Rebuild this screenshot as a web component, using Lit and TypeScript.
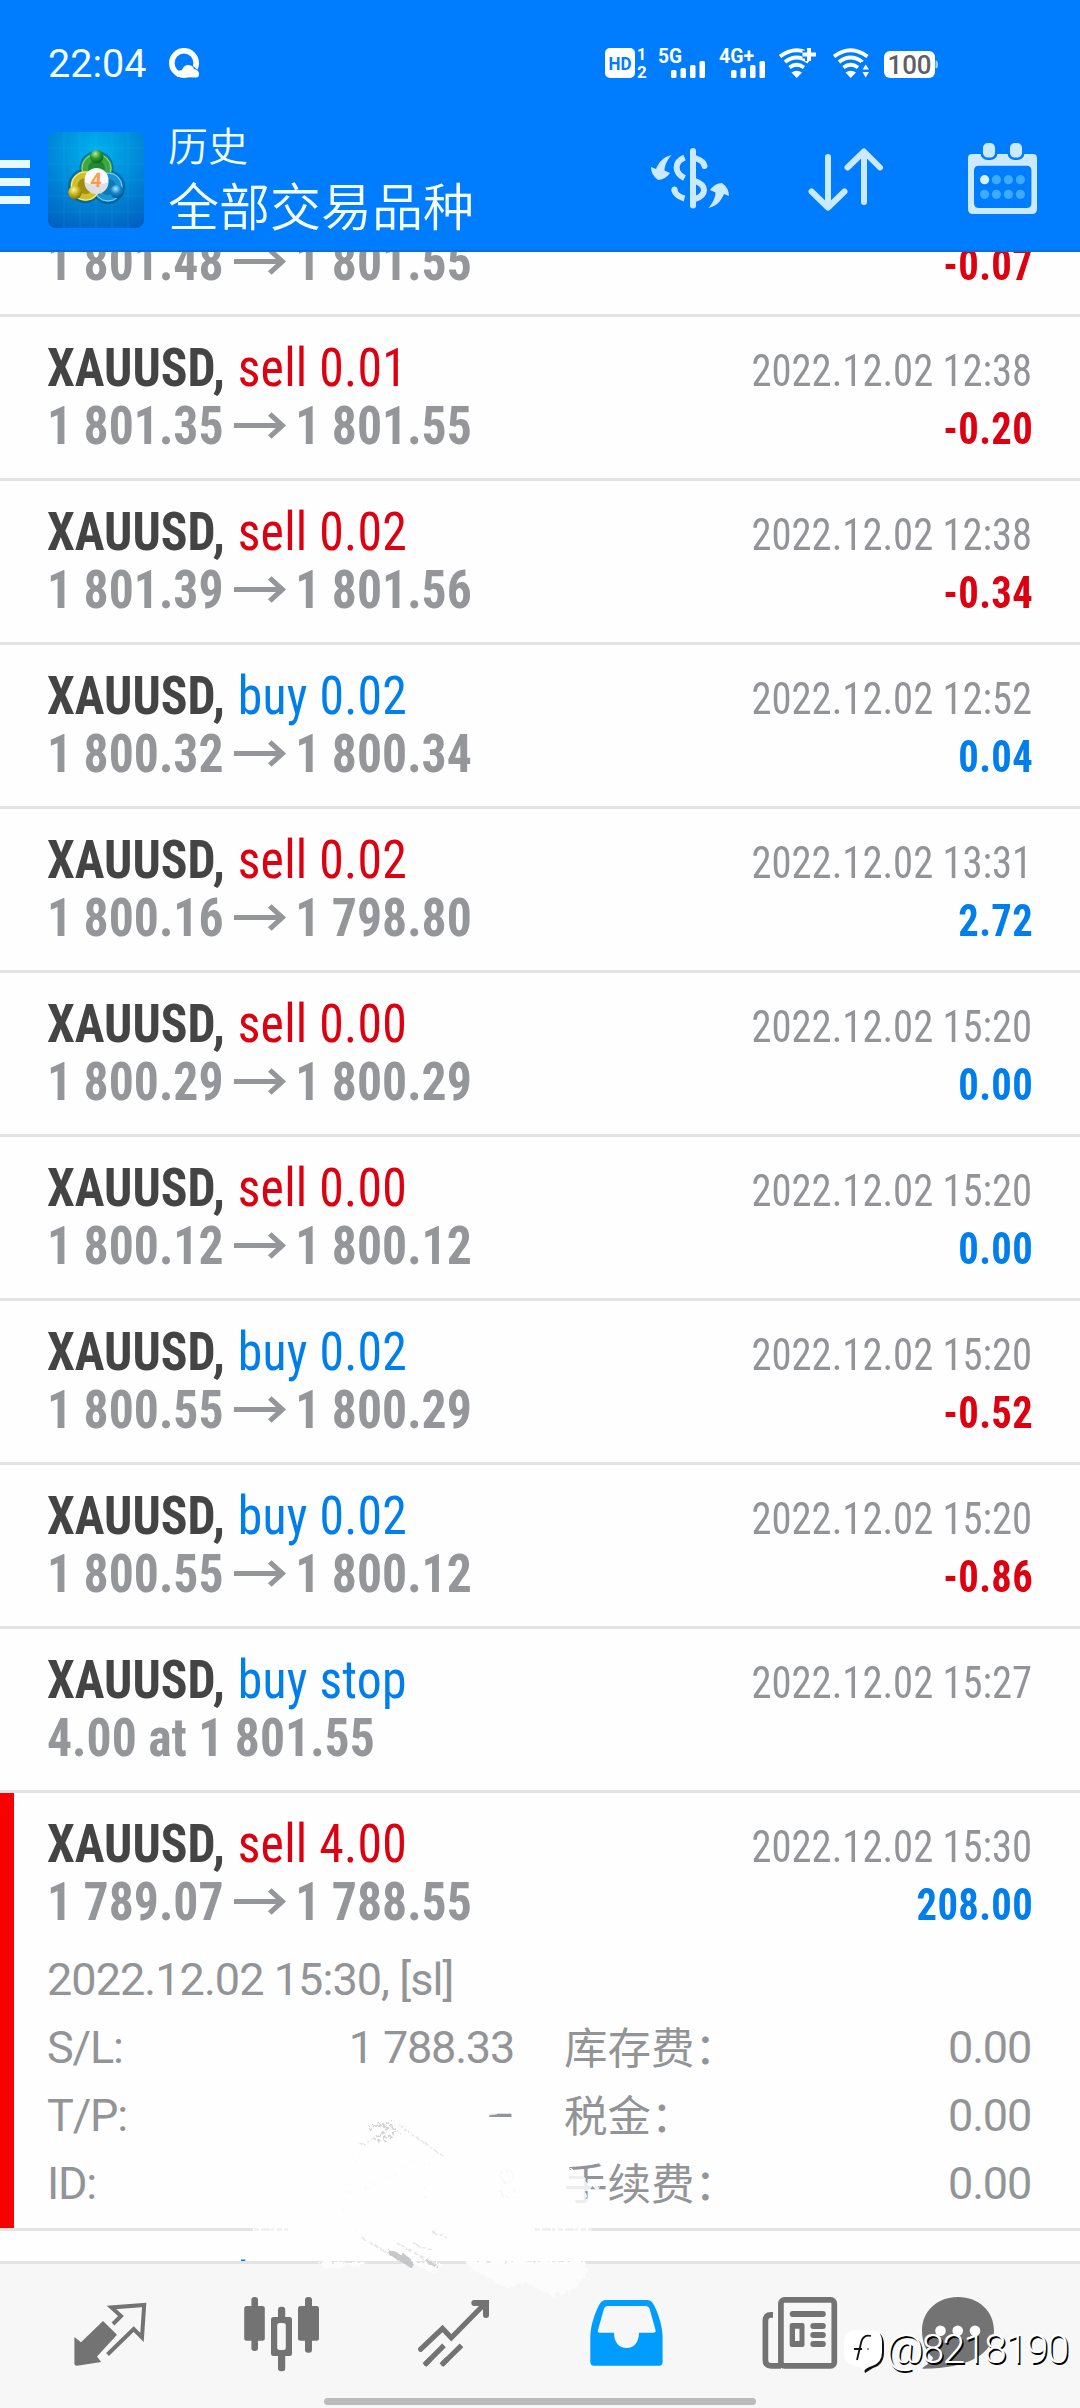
import { LitElement, html, svg, css, nothing } from "lit";
import { customElement, property } from "lit/decorators.js";

interface Deal {
  side: "buy" | "sell";
  label: string;
  from?: string;
  to?: string;
  note?: string;
  time: string;
  profit?: string;
}

const DEALS: Deal[] = [
  { side: "sell", label: "sell 0.01", from: "1 801.48", to: "1 801.55", time: "2022.12.02 12:38", profit: "-0.07" },
  { side: "sell", label: "sell 0.01", from: "1 801.35", to: "1 801.55", time: "2022.12.02 12:38", profit: "-0.20" },
  { side: "sell", label: "sell 0.02", from: "1 801.39", to: "1 801.56", time: "2022.12.02 12:38", profit: "-0.34" },
  { side: "buy", label: "buy 0.02", from: "1 800.32", to: "1 800.34", time: "2022.12.02 12:52", profit: "0.04" },
  { side: "sell", label: "sell 0.02", from: "1 800.16", to: "1 798.80", time: "2022.12.02 13:31", profit: "2.72" },
  { side: "sell", label: "sell 0.00", from: "1 800.29", to: "1 800.29", time: "2022.12.02 15:20", profit: "0.00" },
  { side: "sell", label: "sell 0.00", from: "1 800.12", to: "1 800.12", time: "2022.12.02 15:20", profit: "0.00" },
  { side: "buy", label: "buy 0.02", from: "1 800.55", to: "1 800.29", time: "2022.12.02 15:20", profit: "-0.52" },
  { side: "buy", label: "buy 0.02", from: "1 800.55", to: "1 800.12", time: "2022.12.02 15:20", profit: "-0.86" },
  { side: "buy", label: "buy stop", note: "4.00 at 1 801.55", time: "2022.12.02 15:27" },
];

const OPEN_DEAL: Deal = {
  side: "sell", label: "sell 4.00", from: "1 789.07", to: "1 788.55", time: "2022.12.02 15:30", profit: "208.00",
};

const DETAILS = [
  ["S/L:", "1 788.33", "库存费：", "0.00"],
  ["T/P:", "–", "税金：", "0.00"],
  ["ID:", "", "手续费：", "0.00"],
];

@customElement("deal-row")
export class DealRow extends LitElement {
  @property({ attribute: false }) deal!: Deal;

  static styles = css`
    :host { display: block; height: 161px; flex: none; font-family: "Roboto Condensed", Roboto, sans-serif; font-stretch: 75%; }
    .row { display: flex; justify-content: space-between; height: 100%; padding: 22px 48px 0 47px; box-sizing: border-box; }
    .left { transform: scaleX(.92); transform-origin: left; }
    .right { transform: scaleX(.902); transform-origin: right; }
    .line { display: flex; align-items: baseline; height: 58px; line-height: 58px; font-size: 54px; white-space: pre; }
    .right .line { justify-content: flex-end; font-size: 45px; padding-top: 6px; height: 52px; line-height: 52px; }
    .symbol { font-weight: 700; color: #444; margin-right: 1.500px; }
    .buy, .pos { color: #007fec; }
    .sell, .neg { color: #dc0010; }
    .sell, .buy { letter-spacing: .300px; }
    .price { font-weight: 700; color: #949699; }
    .arrow { width: 59px; height: 30px; margin: 0 8px 0 11px; align-self: center; }
    .time { color: #929497; }
    .profit { font-weight: 700; letter-spacing: .400px; margin-right: -1px; }
  `;

  render() {
    const d = this.deal;
    return html`<div class="row">
      <div class="left">
        <div class="line"><span class="symbol">XAUUSD, </span><span class=${d.side}>${d.label}</span></div>
        <div class="line price">${d.note ?? html`<span>${d.from}</span><svg class="arrow" viewBox="0 0 52 30" preserveAspectRatio="none"><path d="M0 14.5H45M34.500 3L46.500 14.500L34.500 26" fill="none" stroke="#949699" stroke-width="5"/></svg><span>${d.to}</span>`}</div>
      </div>
      <div class="right">
        <div class="line"><span class="time">${d.time}</span></div>
        ${d.profit ? html`<div class="line"><span class="profit ${d.profit.startsWith("-") ? "neg" : "pos"}">${d.profit}</span></div>` : nothing}
      </div>
    </div>`;
  }
}

const bars = svg`<rect x="13" y="22" width="5.500" height="8" rx="1.500"/><rect x="22.500" y="20" width="5.500" height="10" rx="1.500"/><rect x="32" y="17" width="5.500" height="13" rx="1.500"/><rect x="41.500" y="13" width="5.500" height="17" rx="1.500"/>`;

const wifiArcs = svg`<g fill="none" stroke="#fff" stroke-width="3.800"><path d="M1 8.500Q17.500-4 34.500 8.500"/><path d="M6 14Q17.500 5 29.500 14"/><path d="M10.500 19.500Q17.500 14 25 19.500"/></g><path d="M12.500 24.500Q17.500 21 23 24.500L17.700 30Z"/>`;

const TABS = [
  svg`<path fill="#737373" d="M103 57L117 70.700 97 92.500 101.200 98 77 101.700Q74.400 101.700 74.400 99.500V73L81 78.300Z"/><path d="M113 60L121 52 111.500 43.500 144.200 41 142 73.500 133.700 65 107.500 90.500" fill="none" stroke="#737373" stroke-width="4"/>`,
  svg`<g fill="#737373"><rect x="251.400" y="33" width="6.600" height="54" rx="3"/><rect x="244.200" y="42" width="20.600" height="34.700" rx="2.500"/><rect x="278" y="42.700" width="7.200" height="64.500" rx="3"/><rect x="271" y="53" width="21" height="39" rx="2.500"/><rect x="305" y="33" width="7" height="55.700" rx="3"/><rect x="298" y="42" width="21" height="34.700" rx="2.500"/></g><rect x="277.200" y="59" width="8.600" height="27" rx="2.500" fill="#f7f7f7"/>`,
  svg`<g fill="none" stroke="#737373" stroke-width="5.200"><path stroke-linecap="round" d="M420.500 85.300L442.500 64.500 451.300 73.700 484 40.500"/><path stroke-width="6" stroke-linecap="round" d="M474.300 39H486V51"/><path d="M424.500 101L444 81.300M441.500 101L461.500 81.300"/><path stroke-linecap="round" d="M426 99.500L430 95.500M443 99.500L447 95.500"/></g>`,
  svg`<path fill="#009dff" fill-rule="evenodd" d="M590.300 98V73C590.300 61 596 46 600 39.500Q602 36 606 36H647Q651 36 653 39.500C657 46 662.600 61 662.600 73V98Q662.600 101.700 659 101.700H594Q590.300 101.700 590.300 98ZM607.500 42Q605 42 604 44.500L598 66Q597 68.700 600 68.700H614C614 78 619 84 626.500 84S639 78 639 68.700H653Q656.500 68.700 655.500 66L649.500 44.500Q648.500 42 646 42Z"/>`,
  svg`<g fill="none" stroke="#737373" stroke-width="5.700"><path d="M773 50.800H771Q765.400 50.800 765.400 57V96Q765.400 101.800 771 101.800H781"/><rect x="780.900" y="35.900" width="53.400" height="65.900" rx="3.500"/></g><g fill="#737373"><rect x="789.700" y="47" width="36.100" height="6" rx="3"/><path fill-rule="evenodd" d="M792 59H802.500Q804.500 59 804.500 61V81Q804.500 83 802.500 83H792Q789.700 83 789.700 81V61Q789.700 59 792 59ZM795 64.700V77H799.500V64.700Z"/><rect x="810.300" y="59" width="15.500" height="6" rx="3"/><rect x="810.300" y="68" width="15.500" height="6" rx="3"/><rect x="810.300" y="77" width="15.500" height="6" rx="3"/></g>`,
  svg`<path fill="#737373" d="M958 33C979 33 994 47.500 994 66.500C994 89 969 104.700 923 104.700Q921.500 104.500 923 103.500C930 98.500 933 96 933 93.500C926 88 922 78 922 66.500C922 47.500 937 33 958 33Z"/><g fill="#fff"><circle cx="940.500" cy="66.700" r="5.300"/><circle cx="957.700" cy="66.700" r="5.300"/><circle cx="975" cy="66.700" r="5.300"/></g>`,
];

@customElement("app-root")
export class AppRoot extends LitElement {
  static styles = css`
    :host { display: block; width: 1080px; height: 2408px; overflow: hidden; position: relative; background: #fefefe; font-family: Roboto, "Noto Sans CJK SC", sans-serif; }
    .page { display: flex; flex-direction: column; height: 2408px; }
    .header { height: 252px; flex: none; background: #007cff; color: #f4fdff; display: flex; flex-direction: column; box-sizing: border-box; border-bottom: 2px solid #0871d6; }
    .status { display: flex; align-items: flex-start; height: 100px; padding: 48px 142px 0 48px; box-sizing: border-box; }
    .clock { font-size: 39.500px; line-height: 31px; width: 120px; }
    .qicon { width: 32px; height: 32px; }
    .signals { margin-left: auto; display: block; width: 334px; height: 32px; overflow: visible; }
    .bar { display: flex; height: 150px; }
    .burger { width: 30px; display: flex; flex-direction: column; gap: 10px; padding-top: 60px; }
    .burger i { height: 8px; background: #e8f8ff; }
    .logo { width: 96px; height: 96px; margin: 32px 0 0 18px; }
    .titles { margin-left: 24px; display: flex; flex-direction: column; font-family: "Noto Sans CJK SC", sans-serif; font-weight: 350; padding-top: 16px; }
    .sub { font-size: 40px; line-height: 56px; height: 52px; }
    .main { font-size: 51px; line-height: 72px; height: 72px; }
    .actions { margin-left: auto; width: 440px; height: 100px; margin-top: 30px; }
    .list { flex: 1; min-height: 0; overflow: hidden; display: flex; flex-direction: column; }
    .list > deal-row, .open { border-bottom: 3px solid #e4e4e4; }
    .list > deal-row:first-child { margin-top: -99px; }
    .open { flex: none; height: 435px; position: relative; box-sizing: content-box; }
    .mark { position: absolute; left: 0; top: 0; width: 14px; height: 435px; background: #f80000; }
    .more { font-size: 45px; letter-spacing: -1.200px; color: #929497; padding: 0 48px 0 47px; line-height: 68px; margin-top: -8px; }
    .comment { height: 68px; letter-spacing: -.950px; }
    .grid { display: grid; grid-template-columns: 200px 1fr 50px 200px 1fr; width: 984px; }
    .grid span { height: 68px; }
    .grid .val { text-align: right; }
    .grid .k2 { grid-column: 4; font-family: "Noto Sans CJK SC", sans-serif; font-size: 43.500px; letter-spacing: 0; margin-top: -2px; }
    .tabs { flex: none; height: 147px; box-sizing: border-box; border-top: 3px solid #e4e4e4; background: #f7f7f7; padding: 0 24px; position: relative; display: flex; }
    .tabs svg { width: 172px; height: 134px; overflow: visible; display: block; }
    .home { position: absolute; left: 324px; bottom: 3px; width: 432px; height: 7px; border-radius: 4px; background: #bbb; }
    .smear { position: absolute; left: 240px; top: 2100px; width: 380px; height: 200px; }
    .mark-by { position: absolute; left: 842px; top: 2326px; display: flex; align-items: flex-start; color: #fff; }
    .mark-by svg { width: 44px; height: 48px; }
    .mark-by span { font: 300 41px/46px Roboto, sans-serif; letter-spacing: -1.900px; text-shadow: 1.500px 1.500px 0 #000; }
  `;

  private header() {
    return html`<header class="header">
      <div class="status">
        <span class="clock">22:04</span>
        <svg class="qicon" viewBox="0 0 32 32"><circle cx="16" cy="15" r="12.200" fill="none" stroke="#fff" stroke-width="5.600"/><path fill="#007cff" d="M13 20L20 14 31 23 30 26Z"/><path fill="#fff" d="M9 29Q8 22 14 22Q16 16.500 21 17Q25 17.500 26 21Q31 22 31 26Q31 29.500 28 29.500Z"/></svg>
        <svg class="signals" viewBox="0 0 334 32" fill="#fff">
          <rect x="1" y="0" width="30" height="30" rx="5"/>
          <text x="16" y="22" font-size="19" font-weight="700" fill="#007cff" text-anchor="middle" textLength="23" lengthAdjust="spacingAndGlyphs">HD</text>
          <text x="33" y="12" font-size="16" font-weight="700">1</text><text x="33" y="29.500" font-size="17" font-weight="700">2</text>
          <text x="54" y="15" font-size="20" font-weight="700" textLength="24" lengthAdjust="spacingAndGlyphs">5G</text><g transform="translate(54)">${bars}</g>
          <text x="115" y="15" font-size="20" font-weight="700" textLength="35" lengthAdjust="spacingAndGlyphs">4G+</text><g transform="translate(114)">${bars}</g>
          <g transform="translate(175)">${wifiArcs}<path d="M30 0V13M23.500 6.500H37" stroke="#007cff" stroke-width="8"/><path d="M30 0V13M23.500 6.500H37" stroke="#fff" stroke-width="4"/></g>
          <g transform="translate(229)">${wifiArcs}<path d="M28 14H38V31H28Z" fill="#007cff"/><path d="M29.500 21.500L32.700 16.500 36 21.500ZM29.500 24L32.700 29.500 36 24Z"/></g>
          <rect x="280" y="3" width="51" height="27" rx="6"/><path d="M331.500 12.500Q334 12.500 334 16.500T331.500 20.500Z" fill="#9fd0ff"/>
          <text x="305.500" y="26" font-size="26" font-weight="500" fill="#5d6064" text-anchor="middle" textLength="44" lengthAdjust="spacingAndGlyphs">100</text>
        </svg>
      </div>
      <div class="bar">
        <div class="burger"><i></i><i></i><i></i></div>
        <svg class="logo" viewBox="48 132 96 96">
          <defs>
            <radialGradient id="bg" cx=".5" cy=".2" r=".9"><stop offset="0" stop-color="#00b2ee"/><stop offset=".45" stop-color="#008edb"/><stop offset="1" stop-color="#0060c0"/></radialGradient>
            <radialGradient id="g" cx=".4" cy=".3" r=".7"><stop offset="0" stop-color="#b9e8a0"/><stop offset=".5" stop-color="#2f9d35"/><stop offset="1" stop-color="#0d6320"/></radialGradient>
            <radialGradient id="y" cx=".4" cy=".3" r=".7"><stop offset="0" stop-color="#fff79a"/><stop offset=".5" stop-color="#cbb51c"/><stop offset="1" stop-color="#857000"/></radialGradient>
            <radialGradient id="b" cx=".4" cy=".3" r=".7"><stop offset="0" stop-color="#b0e8ff"/><stop offset=".5" stop-color="#1389cf"/><stop offset="1" stop-color="#06528f"/></radialGradient>
          </defs>
          <rect x="48" y="132" width="96" height="96" rx="8" fill="url(#bg)"/>
          <path d="M64 132V228M80 132V228M96 132V228M112 132V228M128 132V228M48 148H144M48 164H144M48 180H144M48 196H144M48 212H144" stroke="#5cc8ff" stroke-opacity=".12" stroke-width="1"/>
          <g fill="none" stroke-width="10" stroke="#0a4a63" stroke-opacity=".5"><circle cx="96.500" cy="168" r="12"/><circle cx="85" cy="186" r="12"/><circle cx="108" cy="187" r="12"/></g>
          <circle cx="96.500" cy="168.500" r="12" fill="#1d8b33" stroke="#3fa843" stroke-width="7"/>
          <circle cx="96.500" cy="168.500" r="14.500" fill="none" stroke="#a6e08c" stroke-width="1"/>
          <circle cx="108" cy="187" r="11.500" fill="#0f79b8" stroke="#1793d6" stroke-width="7"/>
          <circle cx="108" cy="187" r="14" fill="none" stroke="#8bd9ff" stroke-width="1"/>
          <circle cx="85.500" cy="186" r="11.500" fill="#a08e10" stroke="#cfc029" stroke-width="7"/>
          <circle cx="85.500" cy="186" r="14" fill="none" stroke="#f7ef8e" stroke-width="1.200"/>
          <circle cx="96.700" cy="156.500" r="6.800" fill="url(#g)"/><circle cx="75" cy="192.500" r="6.800" fill="url(#y)"/><circle cx="117" cy="191.500" r="6.800" fill="url(#b)"/>
          <circle cx="96.500" cy="180" r="12" fill="#fbfbfb"/><path d="M84.500 182A12 12 0 0 0 108.500 182Q96.500 187 84.500 182Z" fill="#dcdfe2"/>
          <text x="96" y="187" font-size="20" font-weight="700" fill="#ff9a4d" text-anchor="middle" transform="translate(9.500 0) skewX(-3)">4</text>
        </svg>
        <div class="titles"><span class="sub">历史</span><span class="main">全部交易品种</span></div>
        <svg class="actions" viewBox="640 130 440 100">
          <g fill="none" stroke="#cbe9ff" stroke-width="6">
            <path d="M693 151V205.500" stroke-linecap="round"/>
            <path d="M695 158C701 160 704 162.500 704.500 166" stroke-linecap="round"/>
            <path d="M695 181C707 185 707 195 695 199"/>
            <path d="M684.500 157.500C674 162 674 172.500 684.500 178"/>
            <path d="M674 189C675 194 679 197 684.500 198.500"/><path d="M674.500 189.500V190" stroke-linecap="round"/>
            <path d="M828 157V207M811.500 191.500L828 207.500 844.500 191.500" stroke-linecap="round" stroke-linejoin="round"/>
            <path d="M864 202V152M847.500 167.500L864 151.500 880 167.500" stroke-linecap="round" stroke-linejoin="round"/>
          </g>
          <g fill="#cbe9ff"><path d="M671.500 155C667 160 664.500 166 664.500 170.500L670 173Q665 180 658 180Q651 175 651 167L656 169C659 162 663 157 671.500 155Z"/><path transform="rotate(180 690 181.500)" d="M671.500 155C667 160 664.500 166 664.500 170.500L670 173Q665 180 658 180Q651 175 651 167L656 169C659 162 663 157 671.500 155Z"/></g>
          <path fill="#cbe9ff" fill-rule="evenodd" d="M972 154H1033Q1037 154 1037 158V209Q1037 214 1032 214H973Q968 214 968 209V158Q968 154 972 154ZM979 165.700Q974 165.700 974 170.500V203Q974 208 979 208H1026.500Q1031.400 208 1031.400 203V170.500Q1031.400 165.700 1026.500 165.700Z"/>
          <g fill="#cbe9ff" stroke="#007cff" stroke-width="2.500"><rect x="981.700" y="141.800" width="14.600" height="17" rx="6"/><rect x="1008.700" y="141.800" width="14.600" height="17" rx="6"/></g>
          ${[179.7, 194.3].map((y, r) => [984.6, 996.4, 1008.4, 1020.4].map((x, c) => svg`<circle cx=${x} cy=${y} r="4.600" fill=${r + c === 0 ? "#d6f1ff" : "#3dacff"}/>`))}
        </svg>
      </div>
    </header>`;
  }

  private smear() {
    return html`<svg class="smear" viewBox="240 2100 380 200">
      <defs><filter id="rough" x="-10%" y="-10%" width="120%" height="120%"><feTurbulence type="fractalNoise" baseFrequency=".22" numOctaves="2" seed="4"/><feDisplacementMap in="SourceGraphic" scale="9"/></filter></defs>
      <path fill="#fefefe" fill-opacity=".75" d="M484 2112H497V2114.500L484 2116Z"/>
      <path filter="url(#rough)" fill="#fefefe" fill-opacity=".85" d="M562 2170H577L584 2176 586 2182 598 2184 600 2189 587 2190 588 2208H562Z"/>
      <path fill="#fefefe" d="M253 2227H588V2232H253Z"/>
      <path d="M254 2229.500H288M535 2229.500H592" stroke="#efefef" stroke-width="2.500" stroke-dasharray="5 2 9 1 3 3"/>
      <path filter="url(#rough)" fill="#fcfcfc" d="M318 2262H366L360 2267 346 2265 338 2269 324 2268ZM408 2262H440L438 2270 434 2274 424 2269ZM464 2261H586V2277L577 2281 578 2288 570 2287 566 2294 558 2293 554 2297 540 2290 528 2284 518 2283 508 2289 496 2282 484 2276 474 2270Z"/>
      <g filter="url(#rough)" fill="none" stroke="#c4c5c8">
        <path stroke-width="3" stroke-opacity=".75" stroke-dasharray="3 2 5 1" d="M369 2130L378 2124 386 2127M372 2139L384 2132 394 2125M379 2143L398 2131M386 2123L392 2121"/>
        <path stroke-width="1.500" stroke-opacity=".4" stroke-dasharray="4 3 2 2" d="M398 2124L414 2135 444 2157M402 2128L428 2145M361 2145L372 2140"/>
        <path stroke-width="1" stroke-opacity=".15" stroke-dasharray="2 6" d="M360 2154L341 2209M420 2146L400 2179M350 2194L400 2172M430 2164L420 2230M355 2230L386 2252"/>
      </g>
      <g filter="url(#rough)" fill="none" stroke="#bdbec1">
        <path stroke-width="5.500" stroke-opacity=".85" d="M390 2252L400 2258 412 2265M400 2254L410 2262"/>
        <path stroke-width="2" stroke-opacity=".35" stroke-dasharray="5 2" d="M396 2242L412 2252 436 2263M414 2244L434 2251M408 2249L424 2259M432 2232L446 2237M362 2238L388 2253"/>
        <path stroke-width="3" stroke-opacity=".7" d="M427 2261L436 2266"/>
      </g>
      <g filter="url(#rough)" fill="none" stroke="#f6f6f6" stroke-width="1.500" stroke-dasharray="3 2"><ellipse cx="507" cy="2176" rx="6" ry="6"/><ellipse cx="507" cy="2190" rx="7" ry="7"/></g>
    </svg>`;
  }

  render() {
    return html`<div class="page">
      ${this.header()}
      <main class="list">
        ${DEALS.map((d) => html`<deal-row .deal=${d}></deal-row>`)}
        <section class="open">
          <div class="mark"></div>
          <deal-row .deal=${OPEN_DEAL}></deal-row>
          <div class="more">
            <div class="comment">2022.12.02 15:30, [sl]</div>
            <div class="grid">${DETAILS.map(([k, v, k2, v2]) => html`<span>${k}</span><span class="val">${v}</span><span class="k2">${k2}</span><span class="val">${v2}</span>`)}</div>
          </div>
        </section>
        <deal-row .deal=${{ side: "buy", label: "buy", note: "", time: "" } as Deal}></deal-row>
      </main>
      <nav class="tabs">
        ${TABS.map((icon, i) => html`<svg viewBox="${24 + 172 * i} 0 172 134">${icon}</svg>`)}
        <div class="home"></div>
      </nav>
    </div>
    ${this.smear()}
    <div class="mark-by">
      <svg viewBox="842 2326 44 48"><path fill="#111" d="M880 2334Q884 2337 884 2345V2352Q884 2365 873 2368L865 2373 863 2366Z"/><path fill="#fff" d="M856 2330H870Q882 2330 882 2342V2352Q882 2363 872 2366Q866 2368 864 2371Q862 2367 856 2366Q844 2364 844 2354V2342Q844 2330 856 2330Z"/><path d="M871 2336Q863 2334 861 2343L857 2360M854 2349H862" fill="none" stroke="#111" stroke-width="1.800"/><circle cx="868" cy="2349" r="1" fill="#777"/></svg>
      <span>@8218190</span>
    </div>`;
  }
}
